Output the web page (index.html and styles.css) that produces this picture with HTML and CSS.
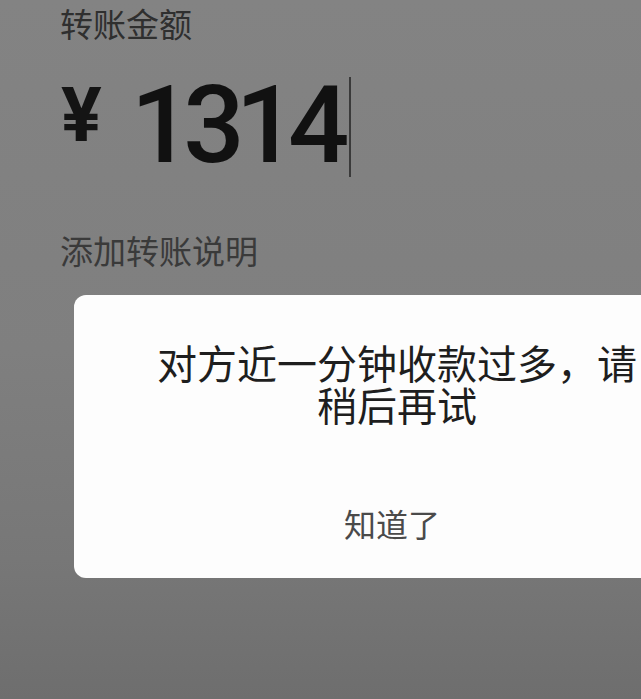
FILE: index.html
```html
<!DOCTYPE html>
<html lang="zh-CN">
<head>
<meta charset="utf-8">
<title>转账</title>
<link rel="stylesheet" href="styles.css">
</head>
<body>
<div class="page">
  <div class="label">转账金额</div>
  <div class="amount">
    <span class="yen">¥</span>
    <span class="num">1314</span>
    <span class="cursor"></span>
  </div>
  <div class="note">添加转账说明</div>
  <div class="dialog-wrap">
    <div class="dialog">
      <div class="msg">对方近一分钟收款过多，请<br>稍后再试</div>
      <div class="btn">知道了</div>
    </div>
  </div>
</div>
</body>
</html>
```
FILE: styles.css
```css
html, body {
  margin: 0;
  padding: 0;
}
body {
  width: 641px;
  height: 699px;
  overflow: hidden;
  background: linear-gradient(#838383 0%, #7f7f7f 50%, #777777 80%, #6e6e6e 100%);
  font-family: "Noto Sans CJK SC", "Noto Sans", sans-serif;
}
.page {
  padding-top: 5px;
  overflow: hidden;
}
.label {
  margin-left: 60px;
  font-size: 33px;
  line-height: 36px;
  color: #2f2f2f;
}
.amount {
  display: flex;
  align-items: flex-start;
  margin-left: 61px;
  margin-top: 36px;
  height: 100px;
}
.yen {
  font-family: Roboto, "Noto Sans", sans-serif;
  font-weight: 700;
  font-size: 76px;
  line-height: 76px;
  color: #141414;
}
.num {
  font-family: Roboto, "Noto Sans", sans-serif;
  font-weight: 500;
  font-size: 108px;
  line-height: 96px;
  letter-spacing: -9px;
  color: #111;
  margin-left: 29px;
}
.cursor {
  width: 2px;
  height: 100px;
  background: #3a3a3a;
  margin-left: 9px;
}
.note {
  margin-left: 60px;
  margin-top: 55px;
  font-size: 33px;
  line-height: 36px;
  color: #3a3a3a;
}
.dialog-wrap {
  overflow: hidden;
  margin-top: 27px;
}
.dialog {
  margin-left: 74px;
  width: 646px;
  height: 283px;
  background: #fdfdfd;
  border-radius: 12px;
  box-sizing: border-box;
  padding-top: 46px;
  text-align: center;
}
.msg {
  font-size: 40px;
  line-height: 42px;
  color: #1e1e1e;
}
.btn {
  margin-top: 80px;
  margin-right: 10px;
  font-size: 32px;
  line-height: 36px;
  color: #4a4a4a;
}
```
